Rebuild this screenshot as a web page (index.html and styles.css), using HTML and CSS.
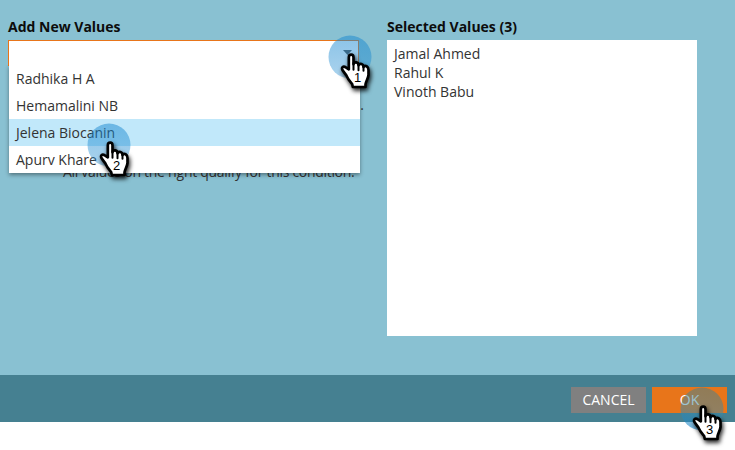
FILE: index.html
```
<!DOCTYPE html>
<html lang="en">
<head>
<meta charset="utf-8">
<title>Add New Values</title>
<link rel="stylesheet" href="styles.css">
</head>
<body>
<svg class="defs" aria-hidden="true">
  <defs>
    <linearGradient id="glow" x1="0" y1="0" x2="0" y2="1">
      <stop offset="0" stop-color="#1686cf" stop-opacity=".5"/>
      <stop offset="1" stop-color="#1686cf" stop-opacity=".36"/>
    </linearGradient>
    <linearGradient id="glow-dim" x1="0.600" y1="0" x2="0.400" y2="1">
      <stop offset="0" stop-color="#3a8293" stop-opacity=".5"/>
      <stop offset=".5" stop-color="#3a8aa8" stop-opacity=".5"/>
      <stop offset="1" stop-color="#1686cf" stop-opacity=".6"/>
    </linearGradient>
    <g id="hand">
      <path class="hand-shape" d="M70 103 V67 C70 56 84 56 84 67 V88 C86 79 99 80 99 91 C103 83 114 87 114 96 C119 89 129 94 129 105 V120 C128 130 122 138 120 148 V156 H82 L80 147 C74 140 67 133 63 122 L52 107 C46 98 53 91 61 97 Z"/>
      <path class="hand-lines" d="M84 84 V104 M99 90 V106 M114 95 V107"/>
    </g>
  </defs>
</svg>
<div class="dialog">
  <main class="panels">
    <section class="add">
      <h2>Add New Values</h2>
      <div class="combo"><svg class="arrow" viewBox="0 0 9 5"><path d="M0 0H9L4.500 5Z"/></svg>
        <ul class="menu">
          <li>Radhika H A</li>
          <li>Hemamalini NB</li>
          <li class="active">Jelena Biocanin</li>
          <li>Apurv Khare</li>
        </ul>
      </div>
      <p class="dot">.</p>
      <p class="hint">All values on the right qualify for this condition.</p>
    </section>
    <section class="selected">
      <h2>Selected Values (3)</h2>
      <ul class="values">
        <li>Jamal Ahmed</li>
        <li>Rahul K</li>
        <li>Vinoth Babu</li>
      </ul>
    </section>
  </main>
  <footer class="actions">
    <button class="cancel">CANCEL</button>
    <button class="ok">OK</button>
  </footer>
</div>
<svg class="marker one" viewBox="0 0 52 64"><circle cx="22" cy="22" r="21.500"/><use href="#hand" transform="translate(-2.500 0) scale(.3333)"/><text x="29.500" y="46.500">1</text></svg>
<svg class="marker two" viewBox="0 0 52 64"><circle cx="22" cy="22" r="21.500"/><use href="#hand" transform="translate(-2.500 0) scale(.3333)"/><text x="29.500" y="46.500">2</text></svg>
<svg class="marker three" viewBox="0 0 52 64"><circle cx="22" cy="22" r="21.500"/><use href="#hand" transform="translate(-2.500 0) scale(.3333)"/><text x="29.500" y="46.500">3</text></svg>
</body>
</html>
```
FILE: styles.css
```
* { box-sizing: border-box; }
body {
  margin: 0;
  height: 450px;
  overflow: hidden;
  position: relative;
  background: #fff;
  color: #333;
  font: 14px/19px "Open Sans", sans-serif;
}
h2, p, ul { margin: 0; padding: 0; }
ul { list-style: none; }
.defs { position: absolute; width: 0; height: 0; }
.dialog { height: 422px; background: #89c1d2; display: flex; flex-direction: column; }
.panels { height: 375px; display: flex; gap: 28px; padding: 17px 0 0 8px; }
.add { width: 351px; }
h2 { height: 23px; font-size: 14px; line-height: 20px; font-weight: 700; color: #0c0c0c; white-space: nowrap; }
.combo {
  position: relative;
  height: 26px;
  background: #fff;
  border: 1px solid #e8751a;
  border-bottom: 0;
  display: flex;
  justify-content: flex-end;
  padding: 9px 6px 0 0;
}
.arrow { width: 9px; height: 5px; fill: #555; }
.menu {
  position: absolute;
  left: 0;
  top: 24px;
  width: 351px;
  background: #fff;
  box-shadow: 0 2px 4px rgba(0, 0, 0, .4);
  clip-path: inset(0 -8px -8px -8px);
}
.menu li { height: 27px; line-height: 27px; padding-left: 7px; }
.menu .active { background: #c1e8fa; }
.dot { height: 96px; padding-top: 29px; text-align: right; margin-right: -5px; }
.hint { margin-left: 55px; white-space: nowrap; letter-spacing: -0.3px; }
.selected { width: 310px; }
.values { height: 296px; background: #fff; padding: 4px 7px; }
.actions {
  height: 47px;
  background: #458091;
  display: flex;
  justify-content: flex-end;
  gap: 6px;
  padding: 12px 8px 0 0;
}
button {
  width: 75px;
  height: 26px;
  padding: 0;
  border: 0;
  color: #fff;
  font: 14px/26px "Open Sans", sans-serif;
}
.cancel { background: #808080; }
.ok { background: #e8751a; }
.marker { position: absolute; width: 52px; height: 64px; overflow: visible; }
.marker circle { fill: url(#glow); }
.three circle { fill: url(#glow-dim); }
.marker use { filter: drop-shadow(4px 8px 6px rgba(0, 0, 0, .85)); }
.marker text { font: 13px "Liberation Sans", sans-serif; fill: #000; text-anchor: middle; }
.hand-shape { fill: #fff; stroke: #000; stroke-width: 8; stroke-linejoin: round; }
.hand-lines { fill: none; stroke: #000; stroke-width: 6; stroke-linecap: round; }
.one { left: 327.5px; top: 35px; }
.two { left: 86.5px; top: 122.5px; }
.three { left: 680px; top: 387px; }
```
